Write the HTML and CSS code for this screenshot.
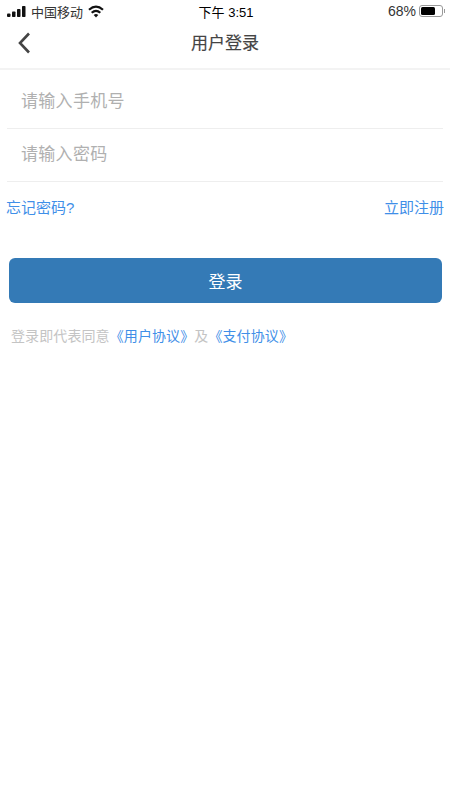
FILE: index.html
```html
<!DOCTYPE html>
<html lang="zh-CN">
  <head>
    <meta charset="UTF-8" />
    <meta name="viewport" content="width=device-width, initial-scale=1.0" />
    <title>用户登录</title>
    <link rel="stylesheet" href="styles.css">
  </head>
  <body>
    <div class="status-bar">
      <div class="status-left">
        <svg class="signal" width="19" height="11" viewBox="0 0 19 11">
          <rect x="0" y="7.500" width="3.500" height="3.500" rx="1" />
          <rect x="5" y="5.500" width="3.500" height="5.500" rx="0.800" />
          <rect x="10" y="3" width="3.500" height="8" rx="0.800" />
          <rect x="15" y="0" width="3.500" height="11" rx="0.800" />
        </svg>
        <span class="carrier">中国移动</span>
        <svg class="wifi" width="16" height="13" viewBox="0 0 16 13">
          <path class="wifi-arc" d="M1 4.800Q8 -1.400 15 4.800" />
          <path class="wifi-arc" d="M3.700 7.800Q8 3.800 12.300 7.800" />
          <path class="wifi-dot" d="M5.700 9.900Q8 8 10.300 9.900L8 12.600z" />
        </svg>
      </div>
      <div class="status-time">下午 3:51</div>
      <div class="status-right">
        <span class="percent">68%</span>
        <div class="battery">
          <div class="battery-level"></div>
        </div>
        <div class="battery-cap"></div>
      </div>
    </div>

    <div class="nav-bar">
      <svg class="back" width="14" height="22" viewBox="0 0 14 22">
        <path d="M12 1.500L3 11l9 9.500" />
      </svg>
      <h1 class="nav-title">用户登录</h1>
    </div>

    <form class="login-form">
      <div class="field field-phone">请输入手机号</div>
      <div class="field field-password">请输入密码</div>
    </form>

    <div class="links">
      <a class="link">忘记密码?</a>
      <a class="link">立即注册</a>
    </div>

    <button class="login-btn" type="button">登录</button>

    <p class="agreement">登录即代表同意<a class="link">《用户协议》</a>及<a class="link">《支付协议》</a></p>
  </body>
</html>
```

FILE: styles.css
```css
html,
body {
  margin: 0;
  padding: 0;
  width: 100%;
  height: 100%;
  background: #fff;
  overflow: hidden;
  font-family: "Liberation Sans", "Noto Sans CJK SC", sans-serif;
}
.status-bar {
  display: flex;
  align-items: center;
  justify-content: space-between;
  height: 22px;
  padding: 0 5px 0 7px;
  color: #000;
  font-size: 13px;
}
.status-left {
  display: flex;
  align-items: center;
  flex: 1;
}
.signal {
  fill: #111;
}
.carrier {
  margin-left: 5px;
  color: #333;
}
.wifi {
  margin-left: 5px;
}
.wifi-arc {
  fill: none;
  stroke: #111;
  stroke-width: 2.200;
}
.wifi-dot {
  fill: #111;
}
.status-time {
  font-size: 13px;
}
.status-right {
  display: flex;
  align-items: center;
  justify-content: flex-end;
  flex: 1;
}
.percent {
  font-size: 14px;
  color: #333;
}
.battery {
  box-sizing: border-box;
  width: 24px;
  height: 12px;
  margin-left: 3px;
  padding: 1px;
  border: 1px solid #999;
  border-radius: 3px;
}
.battery-level {
  width: 68%;
  height: 100%;
  background: #000;
  border-radius: 1.500px;
}
.battery-cap {
  width: 1px;
  height: 4px;
  margin-left: 1px;
  background: #999;
}
.nav-bar {
  position: relative;
  display: flex;
  align-items: center;
  justify-content: center;
  height: 46px;
  border-bottom: 2px solid #f3f3f3;
}
.back {
  position: absolute;
  left: 17px;
  top: 10px;
  fill: none;
  stroke: #444;
  stroke-width: 2.600;
}
.nav-title {
  margin: 0;
  padding-bottom: 8px;
  font-size: 17px;
  font-weight: 400;
  color: #444;
  -webkit-text-stroke: 0.150px #444;
}
.login-form {
  padding: 0 7px;
}
.field {
  display: flex;
  align-items: center;
  box-sizing: border-box;
  padding-left: 14px;
  border-bottom: 1px solid #eee;
  color: #b0b0b0;
  font-size: 17px;
  letter-spacing: 0.300px;
}
.field-phone {
  height: 59px;
}
.field-password {
  height: 53px;
  padding-bottom: 6px;
}
.links {
  display: flex;
  justify-content: space-between;
  padding: 16px 6px 0;
  font-size: 15px;
  line-height: 20px;
}
.link {
  color: #3f8fe8;
}
.login-btn {
  display: block;
  width: 433px;
  height: 45px;
  margin: 40px 0 0 9px;
  padding: 0;
  border: 0;
  border-radius: 6px;
  background: #347ab6;
  color: #fff;
  font-family: inherit;
  font-size: 17px;
}
.agreement {
  margin: 23px 0 0 11px;
  color: #c4c4c4;
  font-size: 14px;
  line-height: 20px;
  letter-spacing: 0.100px;
}
```
